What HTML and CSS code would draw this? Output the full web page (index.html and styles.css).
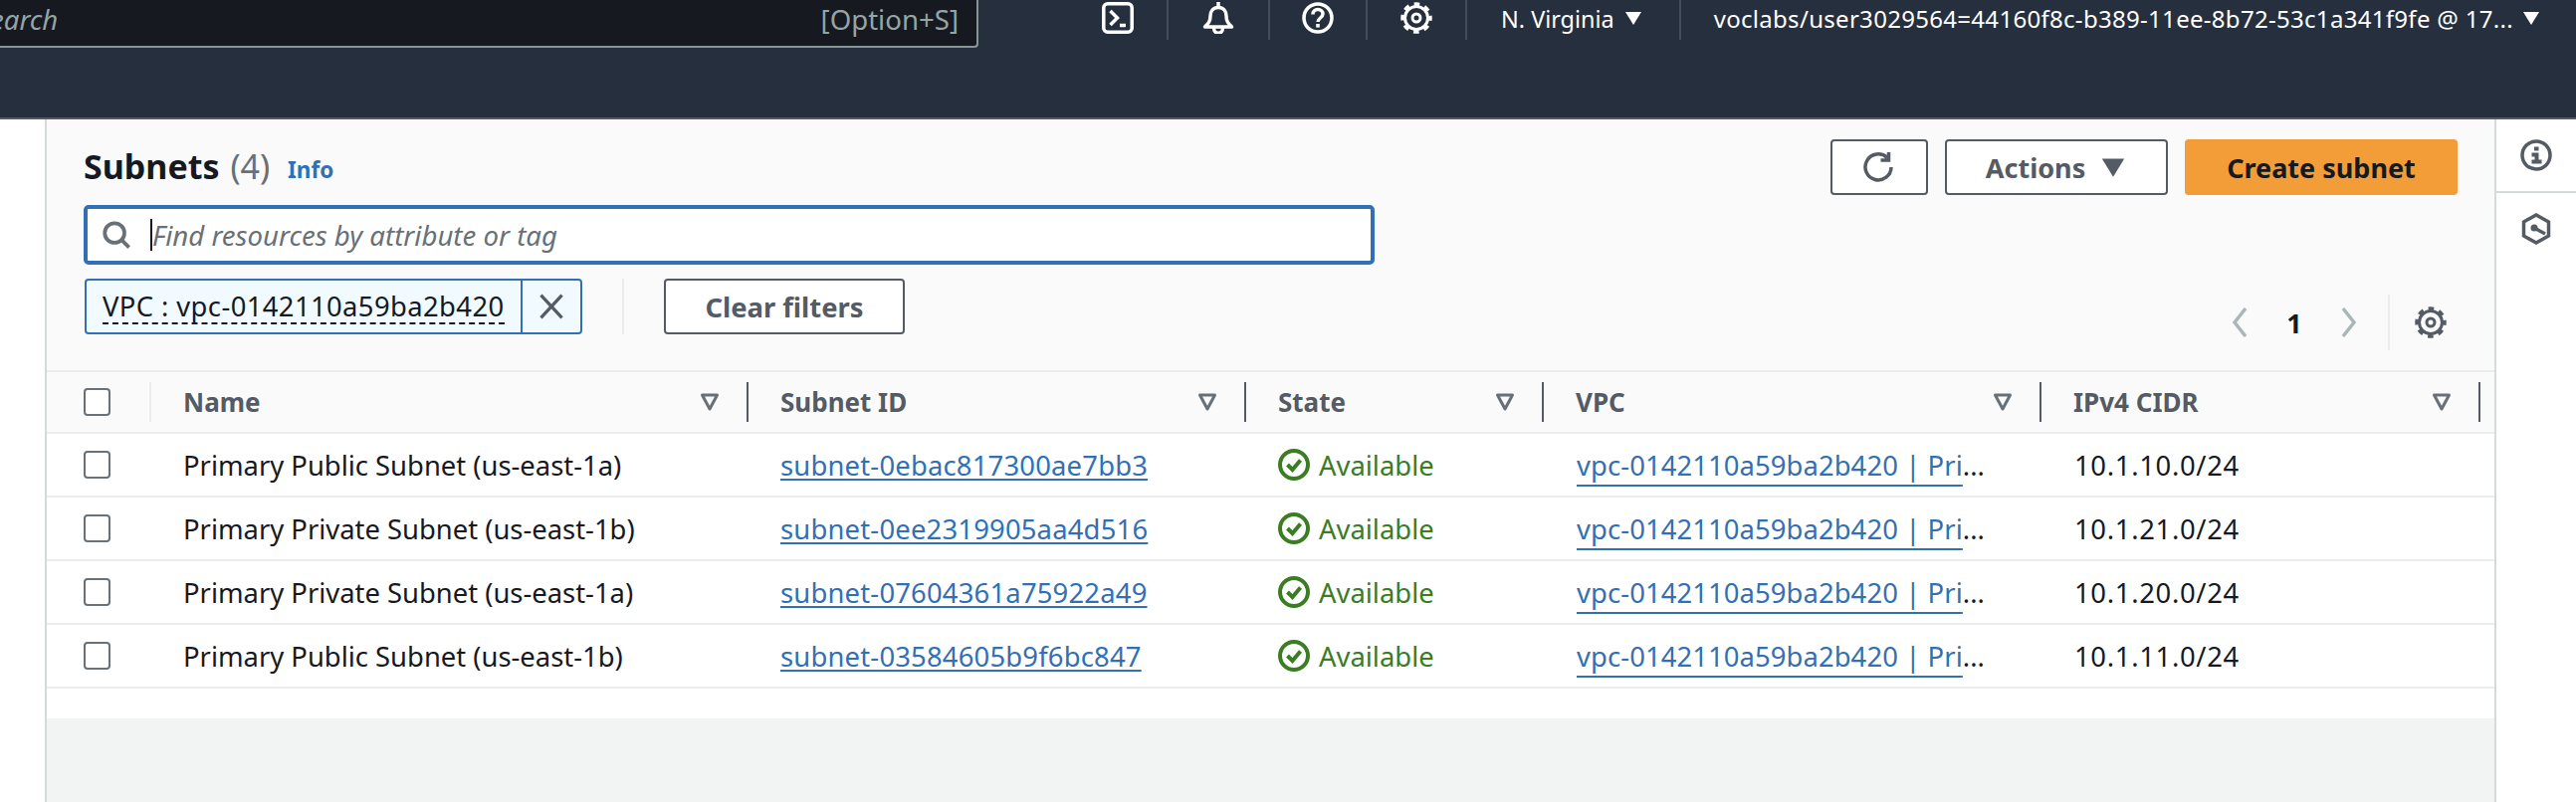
FILE: index.html
```html
<!doctype html>
<html>
<head>
<meta charset="UTF-8">
<title>Subnets</title>
<link rel="stylesheet" href="styles.css">
</head>
<body>
<svg class="defs">
	<symbol id="gear" viewBox="0 0 32 32"><circle cx="16" cy="16" r="11.500" fill="none" stroke="currentColor" stroke-width="3"/><circle cx="16" cy="16" r="14" fill="none" stroke="currentColor" stroke-width="3.500" stroke-dasharray="5.600 5.400" stroke-dashoffset="2.800"/><circle cx="16" cy="16" r="4" fill="none" stroke="currentColor" stroke-width="3"/></symbol>
	<symbol id="caret" viewBox="0 0 20 20"><path d="M2 4h16l-8 13z" fill="currentColor"/></symbol>
	<symbol id="sort" viewBox="0 0 20 20"><path d="M2.500 3h15l-7.500 14z" fill="none" stroke="currentColor" stroke-width="3" stroke-linejoin="round"/></symbol>
	<symbol id="ok" viewBox="0 0 32 32"><circle cx="16" cy="16" r="14" fill="none" stroke="currentColor" stroke-width="4"/><path d="M9.500 16l5 5 8-9.500" fill="none" stroke="currentColor" stroke-width="4"/></symbol>
</svg>

<header class="topbar">
	<div class="search-box">
		<span class="search-text">Search</span>
		<span class="search-key">[Option+S]</span>
	</div>
	<div class="top-icons">
		<span class="top-icon"><svg viewBox="0 0 32 32"><rect x="1.800" y="1.800" width="28.400" height="28.400" rx="4" fill="none" stroke="currentColor" stroke-width="3.500"/><path d="M8.500 9l7 7-7 7M18 23.500h6" fill="none" stroke="currentColor" stroke-width="3.500"/></svg></span>
		<span class="top-icon"><svg viewBox="0 0 32 32"><path d="M2.500 25c3-3 5.500-5 5.500-11 0-5 3-8.500 8-8.500s8 3.500 8 8.500c0 6 2.500 8 5.500 11z" fill="none" stroke="currentColor" stroke-width="3.500" stroke-linejoin="round"/><path d="M16 0v5M11.500 26c0 7 9 7 9 0" fill="none" stroke="currentColor" stroke-width="3.500"/></svg></span>
		<span class="top-icon"><svg viewBox="0 0 32 32"><circle cx="16" cy="16" r="14" fill="none" stroke="currentColor" stroke-width="3.500"/><path d="M11 12.500c0-3 2.200-5 5-5s5 2 5 4.500c0 4-5 4-5 8" fill="none" stroke="currentColor" stroke-width="3.500"/><rect x="14.200" y="22" width="3.600" height="3.600" fill="currentColor"/></svg></span>
		<span class="top-icon"><svg><use href="#gear"/></svg></span>
		<span class="top-menu region">N. Virginia <svg class="top-caret"><use href="#caret"/></svg></span>
		<span class="top-menu account">voclabs/user3029564=44160f8c-b389-11ee-8b72-53c1a341f9fe @ 17... <svg class="top-caret"><use href="#caret"/></svg></span>
	</div>
</header>

<div class="layout">
	<main class="panel">
		<section class="container-head">
			<div class="title-row">
				<h1 class="title">Subnets <span class="count">(4)</span> <a class="info">Info</a></h1>
				<div class="actions">
					<button class="btn btn-icon"><svg viewBox="0 0 32 32"><path d="M28 16a13 13 0 1 1-4-9.500M25.500 1v8h-8" fill="none" stroke="currentColor" stroke-width="3.500"/></svg></button>
					<button class="btn btn-actions">Actions <svg class="btn-caret"><use href="#caret"/></svg></button>
					<button class="btn btn-primary">Create subnet</button>
				</div>
			</div>
			<div class="filter-input">
				<svg class="search-icon" viewBox="0 0 32 32"><circle cx="14" cy="14" r="10.500" fill="none" stroke="currentColor" stroke-width="4"/><path d="M21.500 21.500l8 8" stroke="currentColor" stroke-width="4"/></svg>
				<span class="cursor"></span>
				<span class="placeholder">Find resources by attribute or tag</span>
			</div>
			<div class="filter-row">
				<div class="token">
					<span class="token-label"><span class="token-text">VPC : vpc-0142110a59ba2b420</span></span>
					<span class="token-close"><svg viewBox="0 0 32 32"><path d="M3 2l26 28M29 2L3 30" stroke="currentColor" stroke-width="4"/></svg></span>
				</div>
				<span class="filter-sep"></span>
				<button class="btn btn-clear">Clear filters</button>
				<div class="pager">
					<svg class="pager-arrow" viewBox="0 0 20 32"><path d="M15 2L4 16l11 14" fill="none" stroke="currentColor" stroke-width="3.500"/></svg>
					<span class="pager-num">1</span>
					<svg class="pager-arrow" viewBox="0 0 20 32"><path d="M5 2l11 14L5 30" fill="none" stroke="currentColor" stroke-width="3.500"/></svg>
					<span class="pager-gear"><svg><use href="#gear"/></svg></span>
				</div>
			</div>
		</section>

		<section class="table">
			<div class="row row-head">
				<div class="cell cell-check"><span class="check"></span></div>
				<div class="cell">Name<svg class="sort"><use href="#sort"/></svg></div>
				<div class="cell">Subnet ID<svg class="sort"><use href="#sort"/></svg></div>
				<div class="cell">State<svg class="sort"><use href="#sort"/></svg></div>
				<div class="cell">VPC<svg class="sort"><use href="#sort"/></svg></div>
				<div class="cell">IPv4 CIDR<svg class="sort"><use href="#sort"/></svg></div>
			</div>
			<div class="row">
				<div class="cell cell-check"><span class="check"></span></div>
				<div class="cell">Primary Public Subnet (us-east-1a)</div>
				<div class="cell"><a class="link">subnet-0ebac817300ae7bb3</a></div>
				<div class="cell state"><svg class="ok"><use href="#ok"/></svg>Available</div>
				<div class="cell"><a class="link vpc">vpc-0142110a59ba2b420 | Pri</a>...</div>
				<div class="cell cidr">10.1.10.0/24</div>
			</div>
			<div class="row">
				<div class="cell cell-check"><span class="check"></span></div>
				<div class="cell">Primary Private Subnet (us-east-1b)</div>
				<div class="cell"><a class="link">subnet-0ee2319905aa4d516</a></div>
				<div class="cell state"><svg class="ok"><use href="#ok"/></svg>Available</div>
				<div class="cell"><a class="link vpc">vpc-0142110a59ba2b420 | Pri</a>...</div>
				<div class="cell cidr">10.1.21.0/24</div>
			</div>
			<div class="row">
				<div class="cell cell-check"><span class="check"></span></div>
				<div class="cell">Primary Private Subnet (us-east-1a)</div>
				<div class="cell"><a class="link">subnet-07604361a75922a49</a></div>
				<div class="cell state"><svg class="ok"><use href="#ok"/></svg>Available</div>
				<div class="cell"><a class="link vpc">vpc-0142110a59ba2b420 | Pri</a>...</div>
				<div class="cell cidr">10.1.20.0/24</div>
			</div>
			<div class="row">
				<div class="cell cell-check"><span class="check"></span></div>
				<div class="cell">Primary Public Subnet (us-east-1b)</div>
				<div class="cell"><a class="link">subnet-03584605b9f6bc847</a></div>
				<div class="cell state"><svg class="ok"><use href="#ok"/></svg>Available</div>
				<div class="cell"><a class="link vpc">vpc-0142110a59ba2b420 | Pri</a>...</div>
				<div class="cell cidr">10.1.11.0/24</div>
			</div>
		</section>
		<div class="table-foot"></div>
	</main>

	<aside class="rail">
		<div class="rail-item rail-info"><svg viewBox="0 0 32 32"><circle cx="16" cy="16" r="14" fill="none" stroke="currentColor" stroke-width="3.500"/><path d="M14 7.500h4.500v4H14zM11.500 13.500h7v7h3v4h-10v-4h3v-3h-3z" fill="currentColor"/></svg></div>
		<div class="rail-item rail-hex"><svg viewBox="0 0 32 32"><path d="M16 2l12.500 7v14L16 30 3.500 23V9z" fill="none" stroke="currentColor" stroke-width="3.500"/><circle cx="14" cy="15" r="3.500" fill="currentColor"/><path d="M14 15l11 6" stroke="currentColor" stroke-width="3.500"/></svg></div>
	</aside>
</div>
</body>
</html>
```

FILE: styles.css
```css
*{ margin:0; padding:0; box-sizing:border-box; }
html,body{ height:100%; overflow:hidden; }
body{ background:#fff; color:#16191f; font-family:"Noto Sans","Open Sans",sans-serif; font-size:27.4px; }
.defs{ display:none; }
svg{ display:block; flex:none; }
button{ font-family:inherit; }

.topbar{ height:120px; background:#252f3e; border-bottom:2px solid #545b64; display:flex; align-items:flex-start; color:#fff; }
.search-box{ width:983px; height:48px; background:#16191f; border:2px solid #879596; border-width:0 2px 2px 0; border-radius:0 0 4px 0; display:flex; justify-content:space-between; align-items:center; padding:0 18px 8px 0; font-size:27.6px; color:#95a5a6; }
.search-text{ margin-left:-24px; font-style:italic; }
.top-icons{ display:flex; align-items:flex-start; margin-left:91px; }
.top-icon{ width:100px; height:40px; border-right:2px solid #414d5c; display:flex; justify-content:center; }
.top-icon:nth-child(2){ width:102px; }
.top-icon:nth-child(3){ width:98px; }
.top-icon svg{ width:32px; height:32px; margin-top:2px; }
.top-menu{ height:40px; display:flex; align-items:flex-start; font-size:23.4px; line-height:38px; white-space:nowrap; }
.region{ gap:9px; padding:0 36px 0 34px; border-right:2px solid #414d5c; }
.account{ gap:8px; padding-left:33px; font-size:24px; letter-spacing:.3px; }
.top-caret{ width:20px; height:20px; margin-top:8px; }

.layout{ display:flex; height:686px; }
.panel{ margin-left:45px; width:2463px; border-left:2px solid #d5dbdb; border-right:2px solid #d5dbdb; background:#f2f3f3; }
.container-head{ height:254px; background:#fafafa; padding:20px 37px 0 37px; border-bottom:2px solid #eaeded; }
.title-row{ display:flex; justify-content:space-between; height:66px; }
.title{ font-size:34px; line-height:44px; font-weight:700; margin-top:5px; white-space:nowrap; }
.count{ font-weight:400; color:#687078; margin-left:2px; }
.info{ font-size:22.5px; font-weight:700; color:#3170b5; margin-left:9px; position:relative; top:-1px; }
.actions{ display:flex; gap:17px; }
.btn{ height:56px; background:#fff; border:2px solid #545b64; border-radius:4px; color:#545b64; font-size:27px; font-weight:700; display:flex; align-items:center; justify-content:center; }
.btn-icon{ width:98px; }
.btn-icon svg{ width:32px; height:32px; }
.btn-actions{ width:224px; gap:14px; }
.btn-caret{ width:28px; height:28px; }
.btn-primary{ width:274px; background:#f29d38; border:0; color:#16191f; }
.filter-input{ width:1297px; height:60px; background:#fff; border:4px solid #3170b5; border-radius:5px; display:flex; align-items:center; padding-left:14px; }
.search-icon{ width:30px; height:30px; color:#687078; }
.cursor{ width:2px; height:32px; background:#16191f; margin-left:19px; }
.placeholder{ font-style:italic; font-size:27.6px; color:#687078; }
.filter-row{ display:flex; align-items:center; margin-top:14px; height:56px; }
.token{ width:500px; height:56px; margin-left:1px; display:flex; background:#f1faff; border:2px solid #3170b5; border-radius:4px; }
.token-label{ flex:1; padding:0 16px; display:flex; align-items:center; letter-spacing:.4px; white-space:nowrap; }
.token-text{ border-bottom:2px dashed #16191f; line-height:32px; margin-top:2px; }
.token-close{ width:60px; border-left:2px solid #3170b5; display:flex; align-items:center; justify-content:center; color:#545b64; }
.token-close svg{ width:26px; height:26px; }
.filter-sep{ width:2px; height:56px; background:#eaeded; margin:0 40px; }
.btn-clear{ width:242px; font-size:27.4px; }
.pager{ margin-left:auto; display:flex; align-items:center; height:56px; margin-top:32px; margin-right:11px; }
.pager-arrow{ width:20px; height:32px; color:#aab7b8; }
.pager-num{ width:88px; text-align:center; font-weight:700; font-size:27px; }
.pager-gear{ height:56px; border-left:2px solid #eaeded; margin-left:30px; padding-left:25px; display:flex; align-items:center; color:#545b64; }
.pager-gear svg{ width:32px; height:32px; }

.table{ background:#fff; }
.row{ display:grid; grid-template-columns:105px 600px 500px 299px 500px 441px; height:64px; border-bottom:2px solid #eaeded; align-items:center; }
.row-head{ height:62px; background:#fafafa; color:#545b64; font-weight:700; }
.cell{ padding-left:32px; white-space:nowrap; display:flex; align-items:center; min-width:0; }
.cell-check{ padding-left:37px; }
.row-head .cell{ height:40px; border-right:2px solid #545b64; justify-content:space-between; padding-right:27px; font-size:26px; }
.row-head .cell-check{ border-right:2px solid #eaeded; }
.check{ width:27px; height:28px; background:#fff; border:2px solid #687078; border-radius:4px; }
.sort{ width:20px; height:20px; color:#687078; }
.link{ color:#3170b5; text-decoration:underline; text-underline-offset:3px; text-decoration-thickness:2px; letter-spacing:.2px; }
.vpc{ letter-spacing:.1px; text-underline-offset:9px; margin-left:1px; }
.state{ color:#3a7d22; gap:9px; }
.ok{ width:32px; height:32px; }
.cidr{ letter-spacing:.7px; padding-left:33px; }
.table-foot{ height:30px; background:#fff; }

.rail{ flex:1; color:#545b64; }
.rail-item{ display:flex; justify-content:center; }
.rail-item svg{ width:32px; height:32px; }
.rail-info{ height:74px; padding-top:20px; border-bottom:2px solid #d5dbdb; }
.rail-hex{ padding-top:20px; }
```
